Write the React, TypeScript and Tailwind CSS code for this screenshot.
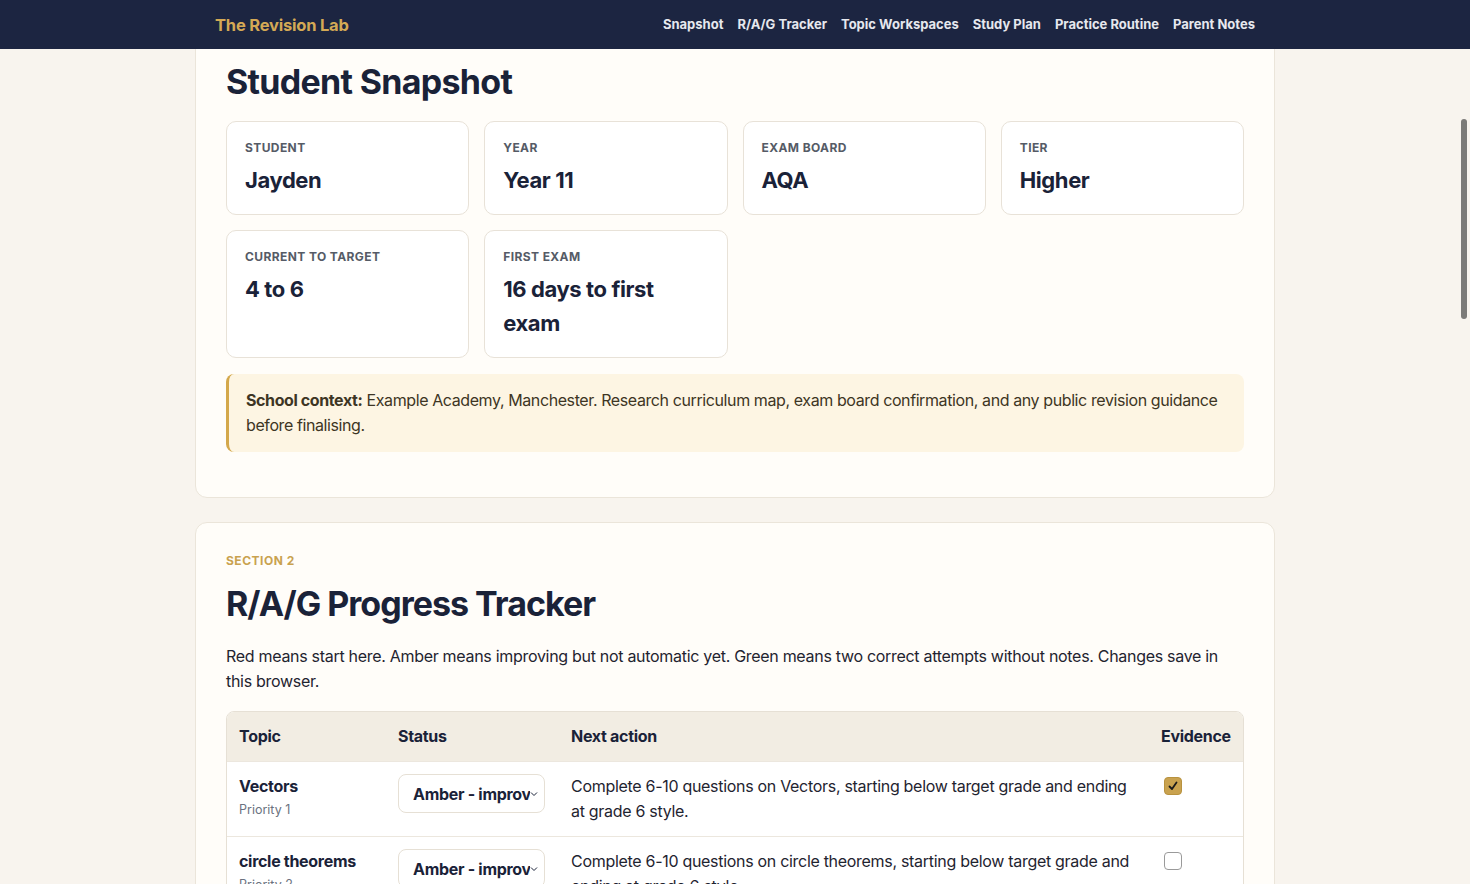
import { useState } from 'react';

const navLinks = ['Snapshot', 'R/A/G Tracker', 'Topic Workspaces', 'Study Plan', 'Practice Routine', 'Parent Notes'];

const facts = [
  { label: 'Student', value: 'Jayden' },
  { label: 'Year', value: 'Year 11' },
  { label: 'Exam board', value: 'AQA' },
  { label: 'Tier', value: 'Higher' },
  { label: 'Current to target', value: '4 to 6' },
  { label: 'First exam', value: '16 days to first exam' },
];

interface Row {
  topic: string;
  priority: number;
  status: string;
  action: string;
  evidence: boolean;
}

const initialRows: Row[] = [
  {
    topic: 'Vectors',
    priority: 1,
    status: 'Amber - improving',
    action: 'Complete 6-10 questions on Vectors, starting below target grade and ending at grade 6 style.',
    evidence: true,
  },
  {
    topic: 'circle theorems',
    priority: 2,
    status: 'Amber - improving',
    action: 'Complete 6-10 questions on circle theorems, starting below target grade and ending at grade 6 style.',
    evidence: false,
  },
];

function StatusSelect({ value }: { value: string }) {
  return (
    <div className="flex h-[39px] w-[147px] items-center overflow-hidden rounded-lg border border-[#e6e0d5] bg-white pl-[14px] pr-[6px]">
      <span className="flex-1 overflow-hidden whitespace-nowrap text-[16px] font-bold tracking-[-0.3px] text-[#1a2238]">{value}</span>
      <svg width="8" height="6" viewBox="0 0 8 6" className="shrink-0">
        <path d="M1 1.5 L4 4.5 L7 1.5" fill="none" stroke="#1a2238" strokeWidth="1" />
      </svg>
    </div>
  );
}

function Check({ checked, onToggle }: { checked: boolean; onToggle: () => void }) {
  return (
    <button
      onClick={onToggle}
      className={`flex h-[18px] w-[18px] items-center justify-center rounded-[4px] border ${
        checked ? 'border-[#b8923f] bg-[#c9a24f]' : 'border-[#9a9a9a] bg-white'
      }`}
    >
      {checked && (
        <svg width="12" height="12" viewBox="0 0 12 12">
          <path d="M2.5 6.5 L5 9 L9.5 2.5" fill="none" stroke="#1a1a1a" strokeWidth="1.8" strokeLinecap="round" strokeLinejoin="round" />
        </svg>
      )}
    </button>
  );
}

export default function App() {
  const [rows, setRows] = useState(initialRows);

  const toggle = (i: number) => {
    setRows(rows.map((r, j) => (j === i ? { ...r, evidence: !r.evidence } : r)));
  };

  return (
    <div className="relative h-screen overflow-hidden bg-[#f8f4ee] font-['Inter',sans-serif] text-[#1f2430]">
      {/* sticky header */}
      <header className="fixed inset-x-0 top-0 z-10 h-[49px] bg-[#1c2541]">
        <div className="mx-auto flex h-full w-[1080px] items-center justify-between px-5 pt-[1px]">
          <span className="text-[16.5px] font-bold tracking-[-0.2px] text-[#d4a955]">The Revision Lab</span>
          <nav className="flex gap-[14px]">
            {navLinks.map(l => (
              <a key={l} className="text-[13px] font-bold text-[#e6e8ee]">{l}</a>
            ))}
          </nav>
        </div>
      </header>

      <main className="mx-auto flex w-[1080px] flex-col gap-6">
        {/* Section 1 */}
        <section className="rounded-xl border border-[#ebe5da] bg-[#fffdf9] px-[30px] pt-[30px] pb-[45px]">
          <p className="mb-[14px] text-[12px] font-bold uppercase leading-4 tracking-[0.5px] text-[#c9a24f]">Section 1</p>
          <h1 className="text-[34px] font-bold leading-[41px] tracking-[-0.7px] text-[#1a2238]">Student Snapshot</h1>
          <div className="mt-[19px] grid grid-cols-4 gap-x-[15px] gap-y-[15px]">
            {facts.map(f => (
              <div key={f.label} className="rounded-[10px] border border-[#e8e2d8] bg-white px-[18px] pt-[18px] pb-[17px]">
                <p className="text-[12px] font-bold uppercase leading-4 tracking-[0.4px] text-[#555b66]">{f.label}</p>
                <p className="mt-[7px] text-[22px] font-bold leading-[34px] tracking-[-0.4px] text-[#1a2238]">{f.value}</p>
              </div>
            ))}
          </div>
          <div className="mt-4 rounded-lg border-l-[3px] border-[#d4a84b] bg-[#fdf5e3] py-[14px] pl-[17px] pr-[8px] text-[16px] leading-[25px] tracking-[-0.4px] text-[#3d3524]">
            <b className="font-bold">School context:</b> Example Academy, Manchester. Research curriculum map, exam board confirmation, and any public revision guidance before finalising.
          </div>
        </section>

        {/* Section 2 */}
        <section className="rounded-xl border border-[#ebe5da] bg-[#fffdf9] px-[30px] pt-[30px] pb-[40px]">
          <p className="mb-[14px] text-[12px] font-bold uppercase leading-4 tracking-[0.5px] text-[#c9a24f]">Section 2</p>
          <h2 className="text-[34px] font-bold leading-[41px] tracking-[-1px] text-[#1a2238]">R/A/G Progress Tracker</h2>
          <p className="mt-5 text-[16px] leading-[25px] tracking-[-0.3px] text-[#1f2430]">
            Red means start here. Amber means improving but not automatic yet. Green means two correct attempts without notes. Changes save in this browser.
          </p>
          <div className="mt-[17px] overflow-hidden rounded-lg border border-[#e6e0d5] bg-white">
            <table className="w-full table-fixed border-collapse text-left">
              <colgroup>
                <col className="w-[159px]" />
                <col className="w-[173px]" />
                <col />
                <col className="w-[94px]" />
              </colgroup>
              <thead className="bg-[#f2ede3]">
                <tr>
                  {['Topic', 'Status', 'Next action', 'Evidence'].map(h => (
                    <th key={h} className="px-3 py-3 text-[16px] font-bold leading-[25px] tracking-[-0.3px] text-[#1a2238]">{h}</th>
                  ))}
                </tr>
              </thead>
              <tbody>
                {rows.map((r, i) => (
                  <tr key={r.topic} className="border-t border-[#ece7de] align-top">
                    <td className="px-3 pt-3 pb-3">
                      <p className="text-[16px] font-bold leading-6 tracking-[-0.3px] text-[#1a2238]">{r.topic}</p>
                      <p className="text-[12.5px] leading-6 text-[#6b7280]">Priority {r.priority}</p>
                    </td>
                    <td className="px-3 pt-3">
                      <StatusSelect value={r.status} />
                    </td>
                    <td className="px-3 pt-3 pb-3 text-[16px] leading-[25px] tracking-[-0.3px] text-[#1f2430]">{r.action}</td>
                    <td className="px-3 pt-[15px]">
                      <div className="pl-[3px]">
                        <Check checked={r.evidence} onToggle={() => toggle(i)} />
                      </div>
                    </td>
                  </tr>
                ))}
              </tbody>
            </table>
          </div>
        </section>
      </main>

      {/* overlay scrollbar thumb */}
      <div className="absolute right-[3px] top-[119px] h-[200px] w-[6px] rounded-full bg-[#7c7b78]" />
    </div>
  );
}
